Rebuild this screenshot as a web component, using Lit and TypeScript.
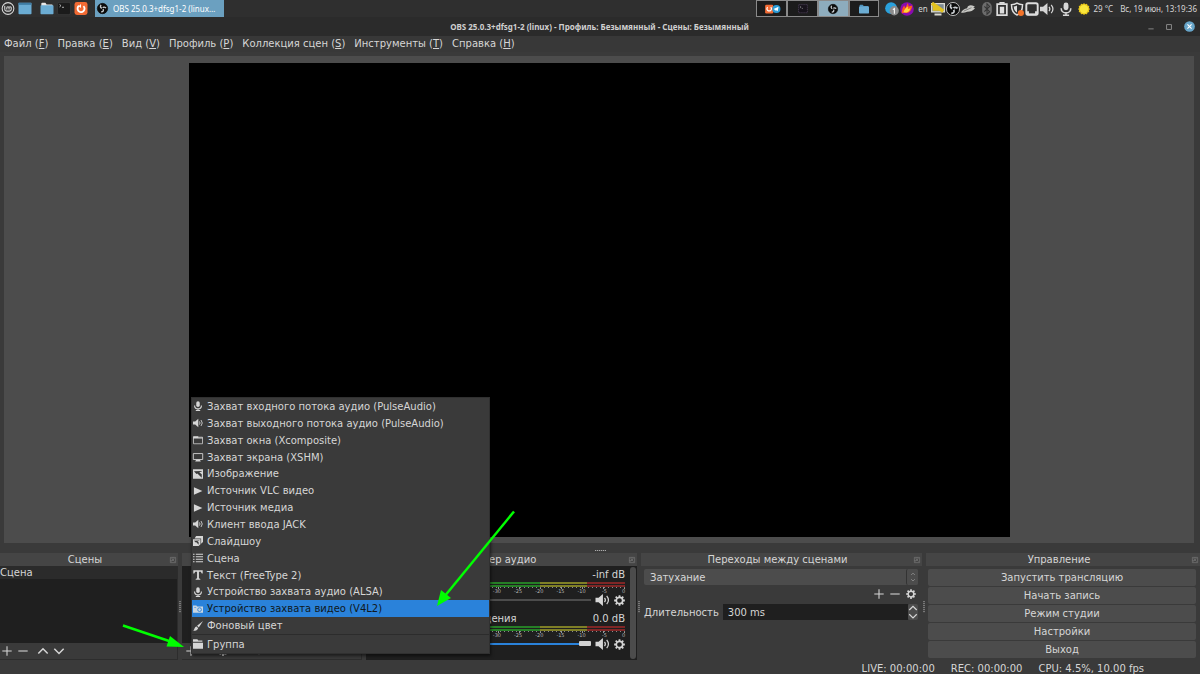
import { LitElement, html, svg, css } from "lit";
import { customElement, property } from "lit/decorators.js";

const glyphs: Record<string, unknown> = {
  mic: svg`<rect x="5.200" y="0.500" width="5.600" height="9" rx="2.800" fill="currentColor"/><path d="M2.500 7c0 7.200 11 7.200 11 0M8 12.500V15M4.500 15.200h7" fill="none" stroke="currentColor" stroke-width="1.800"/>`,
  speaker: svg`<path d="M0 5.500h3.500L8.500 1.200v13.600L3.500 10.500H0z" fill="currentColor"/><path d="M10.300 5.500q2 2.500 0 5M12.800 3.200q4 4.800 0 9.600" fill="none" stroke="currentColor" stroke-width="1.400"/>`,
  window: svg`<path d="M0.800 3.500h14.400v10.500H.8z" fill="none" stroke="currentColor" stroke-width="1.200"/><path d="M.3 1.800h8.200V4H15.500v1.500H.3z" fill="currentColor"/>`,
  monitor: svg`<path d="M.5 2.500h15v9.500H.5z" fill="none" stroke="currentColor" stroke-width="1.400"/><path d="M5 12.500h6l1.500 2.500h-9z" fill="currentColor"/>`,
  image: svg`<path fill-rule="evenodd" fill="currentColor" d="M0 0.500h16v15H0zM1.500 3.500l4 4.500 1.500-1 7 7V8.500L10 5l4-1V3z"/>`,
  play: svg`<path d="M1.500 2L15 8 1.500 14z" fill="currentColor"/>`,
  slides: svg`<path d="M5 0h11v9.500l-3 3V4H2.500z" fill="currentColor"/><path fill-rule="evenodd" fill="currentColor" d="M0 5h12v8l-3 3H0zM1.500 7.500l3 3 1-.5 3.500 4V10L7 8.500l3-.5V7z"/>`,
  list: svg`<path d="M0 2h2.500M0 6h2.500M0 10h2.500M0 14h2.500M4.500 2H16M4.500 6H16M4.500 10H16M4.500 14H16" stroke="currentColor" stroke-width="1.700"/>`,
  text: svg`<path d="M.5 .5h15v5H14L12.500 2.800h-3v10.400l2.200 1v1.300H4.300v-1.300l2.200-1V2.800h-3L2 5.500H.5z" fill="currentColor"/>`,
  camera: svg`<path d="M0 2.500h5.500L6.500 4H16v10H0z" fill="currentColor"/><circle cx="10.500" cy="9" r="3" fill="none" stroke="#2a82da" stroke-width="1.400"/><path d="M2 5.500h3" stroke="#2a82da"/>`,
  brush: svg`<path d="M16 0L6.500 7.500l2.800 3z" fill="currentColor"/><path d="M5.800 8.700l2.500 2.800C7.300 15 3.500 15.700 0 15.700 3 14 1.500 9.800 5.800 8.700z" fill="currentColor"/>`,
  folder: svg`<path d="M0 .5h7L8.500 2.500H15v2H0zM0 5.800h16V15.500H0z" fill="currentColor"/>`,
  plus: svg`<path d="M8 .5v15M.5 8h15" stroke="currentColor" stroke-width="1.700"/>`,
  minus: svg`<path d="M.5 8h15" stroke="currentColor" stroke-width="1.700"/>`,
  up: svg`<path d="M.5 12L8 4.500l7.500 7.500" fill="none" stroke="currentColor" stroke-width="2.400"/>`,
  down: svg`<path d="M.5 4.500L8 12l7.500-7.500" fill="none" stroke="currentColor" stroke-width="2.400"/>`,
  gear: svg`<circle cx="8" cy="8" r="4.600" fill="none" stroke="currentColor" stroke-width="2.400"/><path d="M8 .2v3M8 12.800v3M.2 8h3M12.800 8h3M2.500 2.500l2 2M11.500 11.500l2 2M13.500 2.500l-2 2M4.500 11.500l-2 2" stroke="currentColor" stroke-width="2.600"/>`,
  float: svg`<path d="M1 1h14v14H1zM4 4l8 8M12 4l-8 8M8 1v5M1 9h5" fill="none" stroke="currentColor" stroke-width="1.800"/>`,
  mint: svg`<circle cx="8" cy="8" r="7.200" fill="none" stroke="#d8d8d8" stroke-width="1.300"/><path d="M4 4.500v4.300q0 2.400 2.400 2.400h3.200q2.400 0 2.400-2.400V7.300q0-1.500-1.400-1.500T9.300 7.300v1.900M9.300 7.300q0-1.500-1.400-1.500T6.500 7.300v1.900" fill="none" stroke="#d8d8d8" stroke-width="1.300"/>`,
  desktop: svg`<rect x="0" y="1" width="16" height="14" rx="1" fill="#6bacd3"/><rect x="0" y="1" width="16" height="2.500" fill="#3f7ca3"/>`,
  files: svg`<path d="M1 2q0-1 1-1h4l1.500 2H14q1 0 1 1v3H1z" fill="#e8e8e8"/><rect x="0" y="4" width="16" height="11" rx="1" fill="#6bacd3"/>`,
  bluefiles: svg`<path d="M1 2q0-1 1-1h4l1.500 2H14q1 0 1 1v3H1z" fill="#4f93bd"/><rect x="0" y="4" width="16" height="11" rx="1" fill="#6bacd3"/>`,
  terminal: svg`<rect x="0" y="0.500" width="16" height="15" rx="2" fill="#1b1b1b" stroke="#444" stroke-width=".6"/><path d="M2.500 3l1.800 1.500L2.500 6M5.500 6.500H8" stroke="#ccc" fill="none"/>`,
  firefox: svg`<rect width="16" height="16" rx="3" fill="#f26a33"/><path d="M5.500 4.700A4.300 4.300 0 1 0 11 5" fill="none" stroke="#fff" stroke-width="2.300"/><path d="M8 2.500v5l-3-2.200z" fill="#fff"/>`,
  obs: svg`<circle cx="8" cy="8" r="7.500" fill="#0b0b0b" stroke="var(--ring, #0b0b0b)"/><g fill="none" stroke="#c9cdd0" stroke-width="2"><path d="M5.800 2.800Q3.800 6.500 7.200 7.600"/><path d="M13.200 7.200Q9.800 4.800 8.300 7.300"/><path d="M6 13Q10.500 12.700 8.800 8.700"/></g><circle cx="8" cy="8" r="1.100" fill="#0b0b0b"/>`,
  pair: svg`<rect x="-3" y="1" width="13" height="14" rx="2" fill="#f26a33"/><path d="M1 5A3.600 3.600 0 1 0 6 5" fill="none" stroke="#fff" stroke-width="2"/><circle cx="15" cy="8" r="6.500" fill="#2b9bd6"/><path d="M10.500 8l8-3.500-1.500 7-3-2-1 1.500-.5-2z" fill="#fff"/>`,
  darkterm: svg`<rect x="1" y="1" width="14" height="13" fill="#17131b" stroke="#5a4a66" stroke-dasharray="2 1"/><path d="M3 3.500l2 1.500-2 1.500M6 7h2" stroke="#999" fill="none"/>`,
  telegram: svg`<circle cx="7" cy="7" r="6.800" fill="#2aa1dc"/><circle cx="10.500" cy="10" r="5.300" fill="#8c8c8c"/><path d="M9 8.700l1.700-1.300v6" stroke="#fff" stroke-width="1.200" fill="none"/>`,
  flame: svg`<circle cx="8" cy="8" r="7.800" fill="#8a0bb0"/><path d="M2 13q0-6 3-9l1 3 3-6 1 4 4-1q0 3-2 6-3 4-7 2z" fill="#ff5a1f"/><path d="M4 12q1-5 5-7l0 3 3-1q-1 4-4 5z" fill="#ffd23a"/>`,
  netmon: svg`<path d="M0 1h16v11H0zM4 13h8v2.500H4z" fill="#d9d9d0"/><path d="M1.500 2.500h13v8h-13z" fill="#7e8b94"/><path d="M1 1.500L14 10.500" stroke="#e2c21f" stroke-width="4"/><path d="M2 2v8h9z" fill="#e2c21f"/>`,
  feather: svg`<path d="M0 12Q2 8 7 7q1-4 6-3l3 1-2 1 2 1q-3 4-9 4-4 2-7 1z" fill="#c9c9c5"/><path d="M3 10.500l9-4" stroke="#777"/>`,
  bluetooth: svg`<rect x="2.500" width="11" height="16" rx="5.500" fill="#6c6c6c"/><path d="M5 5l6 6-3 3V2l3 3-6 6" stroke="#333" stroke-width="1.200" fill="none"/>`,
  battery: svg`<path d="M2.500 2.500h11v12.500h-11z" fill="none" stroke="#ddd" stroke-width="2"/><path d="M5 0h6v2H5zM5.500 5.500h5v7.500h-5z" fill="#ddd"/>`,
  shield: svg`<path d="M8 1.200q3 1.800 6.300 1.800 0 9-6.300 11.800Q1.700 12 1.700 3 5 3 8 1.200z" fill="none" stroke="#ddd" stroke-width="1.700"/><path d="M8 4v8q-3.500-2-3.700-7Q6 5 8 4z" fill="#ddd"/><circle cx="12.500" cy="12.500" r="3.500" fill="#f37329"/>`,
  frame: svg`<rect x="1.500" y="1.500" width="13" height="13" rx="2" fill="none" stroke="#ddd" stroke-width="2.200"/><path d="M2 10.500h2.500V13h7v-2.500H14V15H2z" fill="#ddd"/>`,
  sun: svg`<path d="M8 0l1.500 1.500L12 1l.8 2.200L15 4l-.5 2.500L16 8l-1.500 1.500L15 12l-2.200.8L12 15l-2.500-.5L8 16l-1.500-1.500L4 15l-.8-2.200L1 12l.5-2.500L0 8l1.500-1.500L1 4l2.200-.8L4 1l2.500.5z" fill="#e9c81b"/><circle cx="8" cy="8" r="5.500" fill="#f9e63c"/>`,
  minimize: svg`<path d="M1 13h14" stroke="#8a8a8a" stroke-width="2.500"/>`,
  maximize: svg`<path d="M1.500 1.500h13v13h-13z" fill="none" stroke="#8a8a8a" stroke-width="2.600"/>`,
  close: svg`<circle cx="8" cy="8" r="7.800" fill="#67a5c9"/><path d="M5 5l6 6M11 5l-6 6" stroke="#fff" stroke-width="1.700"/>`,
};

@customElement("ui-glyph")
export class UiGlyph extends LitElement {
  @property() name = "plus";
  static styles = css`
    :host { display: block; flex: none; width: 10px; height: 10px; }
    svg { display: block; width: 100%; height: 100%; overflow: visible; }
  `;
  render() {
    return html`<svg viewBox="0 0 16 16" aria-hidden="true">${glyphs[this.name]}</svg>`;
  }
}

const reset = css`
  * { box-sizing: border-box; }
  button, input, select {
    font: inherit; color: inherit; background: none; border: 0; margin: 0; padding: 0;
    border-radius: 0; min-width: 0; appearance: none; outline: none;
  }
`;

@customElement("mixer-channel")
export class MixerChannel extends LitElement {
  @property() name = "";
  @property() level = "";
  @property({ type: Number }) value = 0;
  static styles = [reset, css`
    :host { display: block; height: 44px; }
    .top { display: flex; justify-content: space-between; line-height: 15px; }
    .meter { height: 5px; background:
      linear-gradient(#1f1f1f, #1f1f1f) 0 2px / 100% 1px no-repeat,
      linear-gradient(90deg, #267f26 0 66.7%, #7f7f26 66.7% 85%, #7f2626 85%); }
    .ticks { height: 2px; background: repeating-linear-gradient(270deg, #8a8a8a 0 1px, transparent 1px 4px) top / 100% 1px no-repeat,
      repeating-linear-gradient(270deg, #999 0 1px, transparent 1px 21px); }
    .scale { display: flex; font-size: 5px; line-height: 4px; height: 4px; color: #b5b5b5; }
    .scale span { flex: 1; text-align: right; margin: 0 -3px 0 3px; }
    .scale span:last-child { margin: 0; }
    .row { display: flex; align-items: center; gap: 4px; height: 14px; }
    input { flex: 1; height: 6px; }
    input::-webkit-slider-runnable-track { height: 2px; background: #4c4c4c; }
    input::-webkit-slider-thumb { appearance: none; width: 12px; height: 5px; margin-top: -2px; border-radius: 1px; background: #d2d2d2; }
    .on::-webkit-slider-runnable-track { background: #2a82da; }
    button { display: block; }
    .mute ui-glyph { width: 15px; height: 14px; }
    .gear ui-glyph { width: 11px; height: 11px; }
  `];
  render() {
    const marks = [-55, -50, -45, -40, -35, -30, -25, -20, -15, -10, -5, 0];
    return html`
      <div class="top"><span>${this.name}</span><span>${this.level}</span></div>
      <div class="meter"></div><div class="ticks"></div>
      <div class="scale">${marks.map((m) => html`<span>${m}</span>`)}</div>
      <div class="row">
        <input type="range" class=${this.value ? "on" : ""} min="0" max="100" .value=${String(this.value)} aria-label=${this.name}>
        <button class="mute" aria-label="Звук"><ui-glyph name="speaker"></ui-glyph></button>
        <button class="gear" aria-label="Параметры"><ui-glyph name="gear"></ui-glyph></button>
      </div>`;
  }
}

const menus: [string, string][] = [
  ["Файл", "F"], ["Правка", "E"], ["Вид", "V"], ["Профиль", "P"],
  ["Коллекция сцен", "S"], ["Инструменты", "T"], ["Справка", "H"],
];
const sources: [string, string][] = [
  ["mic", "Захват входного потока аудио (PulseAudio)"],
  ["speaker", "Захват выходного потока аудио (PulseAudio)"],
  ["window", "Захват окна (Xcomposite)"],
  ["monitor", "Захват экрана (XSHM)"],
  ["image", "Изображение"],
  ["play", "Источник VLC видео"],
  ["play", "Источник медиа"],
  ["speaker", "Клиент ввода JACK"],
  ["slides", "Слайдшоу"],
  ["list", "Сцена"],
  ["text", "Текст (FreeType 2)"],
  ["mic", "Устройство захвата аудио (ALSA)"],
  ["camera", "Устройство захвата видео (V4L2)"],
  ["brush", "Фоновый цвет"],
];
const controls = ["Запустить трансляцию", "Начать запись", "Режим студии", "Настройки", "Выход"];

@customElement("app-root")
export class AppRoot extends LitElement {
  static styles = [reset, css`
    :host {
      display: flex; flex-direction: column; position: relative; height: 100vh; min-height: 400px; overflow: hidden;
      background: #3a3a3a; color: #d6d6d6; font: 10px/13px "DejaVu Sans", sans-serif; white-space: nowrap;
    }
    .panel { display: flex; justify-content: space-between; height: 17px; background: #2f2f2f; font: 8px/17px "Noto Sans", sans-serif; }
    .launch, .tray { display: flex; align-items: center; }
    .launch { gap: 3px; padding-left: 1px; }
    .launch ui-glyph { width: 14px; height: 13px; }
    .launch .gap { margin-left: 5px; }
    .task { display: flex; align-items: center; gap: 5px; width: 129px; height: 17px; margin-left: 4px; padding: 0 2px; background: #6ba0c0; color: #fff; }
    .task ui-glyph { width: 11px; height: 11px; }
    .spaces { display: flex; width: 123px; height: 17px; margin-right: 5px; }
    .spaces button { flex: 1; display: flex; align-items: center; justify-content: center; border: 1px solid #8a8a8a; background: #1c1c1c; }
    .spaces .here { background: #8dacbd; }
    .tray { gap: 1px; padding-right: 3px; }
    .tray ui-glyph { width: 14px; height: 14px; }
    .tray .spaces ui-glyph { width: 10px; height: 10px; }
    .tray .wide { margin-right: 4px; }
    .obs { --ring: #ccc; }
    .lang { width: 15px; text-align: center; }
    .tray .sun { width: 12px; height: 12px; margin: 0 2px 0 4px; }
    .clock { margin-left: 6px; }
    .title { display: flex; align-items: center; height: 19px; padding: 0 5px; background: #2b2b2b; font: bold 8px/19px "Noto Sans", sans-serif; color: #cfcfcf; }
    .title h1 { flex: 1; margin: 0; padding-left: 46px; font: inherit; text-align: center; }
    .title div { display: flex; align-items: center; gap: 12px; }
    .title ui-glyph { width: 6px; height: 6px; }
    .title .x { width: 11px; height: 11px; }
    .menubar { display: flex; gap: 9px; height: 16px; padding: 0 4px 2px; background: #383838; }
    .preview { flex: 1; min-height: 0; display: flex; justify-content: center; margin: 4px 6px 0 4px; padding: 7px 0 6px; background: #4c4c4c; }
    .canvas { height: 100%; aspect-ratio: 821 / 474; background: #000; }
    .hgrip { display: flex; justify-content: center; align-items: flex-end; height: 10px; padding-bottom: 2px; }
    .hgrip i { width: 11px; height: 1px; background: repeating-linear-gradient(90deg, #aaa 0 1px, #555 1px 2px); }
    .docks { display: grid; grid-template-columns: 178fr 4px 180fr 4px 271fr 4px 281fr 4px 274fr; grid-template-rows: 107px; }
    .vgrip { align-self: center; justify-self: center; width: 2px; height: 12px; background: repeating-linear-gradient(#777 0 1px, #444 1px 2px); }
    .dock { display: flex; flex-direction: column; min-width: 0; position: relative; }
    .dock h2 { display: flex; align-items: center; height: 13px; margin: 0; padding: 0 2px 0 0; background: #454545; font: inherit; }
    .dock h2 span { flex: 1; text-align: center; }
    .dock h2 ui-glyph { width: 6px; height: 6px; color: #777; }
    .list { flex: 1; background: #1f1f1f; border-right: 1px solid #2c2c2c; }
    .list button { display: block; width: 100%; height: 13px; background: #2b2b2b; text-align: left; }
    .tools { display: flex; align-items: center; gap: 6px; height: 17px; padding: 0 2px; border: solid #2d2d2d; border-width: 0 1px 1px 0; }
    .tools .far { margin-left: 4px; }
    .sources .tools { padding-left: 4px; }
    .mixer { display: flex; flex: 1; gap: 5px; padding: 1px 1px 1px 5px; background: #1f1f1f; }
    .mixer > .channels { flex: 1; min-width: 0; }
    .bar { width: 6px; border-radius: 3px; background: #4c4c4c; }
    .trans { display: flex; flex-direction: column; padding: 3px 4px 0 3px; }
    .combo { display: flex; align-items: center; height: 16px; border-radius: 2px; background: #4c4c4c; }
    .combo select { flex: 1; height: 16px; padding: 0 6px; }
    .spin { display: flex; flex-direction: column; align-items: center; justify-content: center; gap: 2px; width: 12px; height: 16px; border-left: 1px solid #333; border-radius: 2px; background: #4c4c4c; }
    .combo .spin ui-glyph { width: 4px; height: 4px; color: #aaa; }
    .ops { display: flex; justify-content: flex-end; align-items: center; gap: 6px; height: 19px; padding: 0 2px 1px 0; }
    .dur { display: flex; align-items: center; gap: 4px; }
    .dur input { flex: 1; height: 16px; padding: 0 5px; background: #1f1f1f; }
    .dur .spin { width: 10px; margin-left: -4px; gap: 0; border: 0; }
    .dur .spin ui-glyph { width: 8px; height: 8px; }
    .controls { display: flex; flex: 1; flex-direction: column; gap: 1px; padding: 3px 4px 2px 2px; }
    .controls button { flex: 1; border-radius: 2px; background: #4c4c4c; }
    .status { display: flex; justify-content: flex-end; gap: 16px; height: 14px; padding: 3px 56px 0 0; line-height: 12px; }
    .popup { position: absolute; left: 9px; bottom: 6px; z-index: 2; display: flex; flex-direction: column; width: 299px; height: 257px; background: #3a3a3a; border: 1px solid #303030; box-shadow: 1px 2px 3px #0008; }
    .popup button { flex: 1; display: flex; align-items: center; gap: 4px; min-height: 0; padding: 0 1px; text-align: left; line-height: 13px; }
    .popup .hot { background: #2a82da; color: #101820; }
    .popup .hot ui-glyph { color: #c9d6e2; }
    .popup hr { width: 100%; height: 1px; margin: 0 0 1px; border: 0; background: #2c2c2c; }
    .arrows { position: absolute; inset: 0; z-index: 3; width: 100%; height: 100%; pointer-events: none; }
  `];

  head(t: string) {
    return html`<h2><span>${t}</span><ui-glyph name="float"></ui-glyph></h2>`;
  }
  tool(n: string, label: string, cls = "") {
    return html`<button class=${cls} aria-label=${label}><ui-glyph name=${n}></ui-glyph></button>`;
  }

  render() {
    return html`
      <nav class="panel">
        <div class="launch">
          <ui-glyph name="mint"></ui-glyph><ui-glyph name="desktop"></ui-glyph>
          <ui-glyph class="gap" name="files"></ui-glyph><ui-glyph name="terminal"></ui-glyph><ui-glyph name="firefox"></ui-glyph>
          <button class="task"><ui-glyph name="obs"></ui-glyph>OBS 25.0.3+dfsg1-2 (linux…</button>
        </div>
        <div class="tray">
          <div class="spaces">
            <button aria-label="1"><ui-glyph name="pair"></ui-glyph></button>
            <button aria-label="2"><ui-glyph name="darkterm"></ui-glyph></button>
            <button aria-label="3" class="here"><ui-glyph name="obs"></ui-glyph></button>
            <button aria-label="4"><ui-glyph name="bluefiles"></ui-glyph></button>
          </div>
          <ui-glyph name="telegram"></ui-glyph><ui-glyph name="flame"></ui-glyph>
          <span class="lang">en</span>
          <ui-glyph name="netmon"></ui-glyph><ui-glyph class="obs" name="obs"></ui-glyph>
          <ui-glyph class="wide" name="feather"></ui-glyph><ui-glyph name="bluetooth"></ui-glyph>
          <ui-glyph name="battery"></ui-glyph><ui-glyph name="shield"></ui-glyph><ui-glyph name="frame"></ui-glyph>
          <ui-glyph class="wide" name="speaker"></ui-glyph><ui-glyph name="mic"></ui-glyph>
          <ui-glyph class="sun" name="sun"></ui-glyph><span>29 °C</span><time class="clock">Вс, 19 июн, 13:19:36</time>
        </div>
      </nav>
      <header class="title">
        <h1>OBS 25.0.3+dfsg1-2 (linux) - Профиль: Безымянный - Сцены: Безымянный</h1>
        <div>
          <button aria-label="Свернуть"><ui-glyph name="minimize"></ui-glyph></button>
          <button aria-label="Развернуть"><ui-glyph name="maximize"></ui-glyph></button>
          <button aria-label="Закрыть"><ui-glyph class="x" name="close"></ui-glyph></button>
        </div>
      </header>
      <nav class="menubar">${menus.map(([t, k]) => html`<button>${t} (<u>${k}</u>)</button>`)}</nav>
      <main class="preview"><div class="canvas"></div></main>
      <div class="hgrip"><i></i></div>
      <div class="docks">
        <section class="dock">
          ${this.head("Сцены")}
          <div class="list"><button>Сцена</button></div>
          <div class="tools">${this.tool("plus", "Добавить")}${this.tool("minus", "Удалить")}${this.tool("up", "Вверх", "far")}${this.tool("down", "Вниз")}</div>
        </section>
        <i class="vgrip"></i>
        <section class="dock sources">
          ${this.head("Источники")}
          <div class="list"></div>
          <div class="tools">${this.tool("plus", "Добавить")}${this.tool("minus", "Удалить")}${this.tool("gear", "Свойства")}${this.tool("up", "Вверх", "far")}${this.tool("down", "Вниз")}</div>
          <div class="popup" role="menu">
            ${sources.map(([icon, t]) => html`<button role="menuitem" class=${icon === "camera" ? "hot" : ""}><ui-glyph name=${icon}></ui-glyph>${t}</button>`)}
            <hr>
            <button role="menuitem"><ui-glyph name="folder"></ui-glyph>Группа</button>
          </div>
        </section>
        <i></i>
        <section class="dock">
          ${this.head("Микшер аудио")}
          <div class="mixer">
            <div class="channels">
              <mixer-channel name="Mic/Aux" level="-inf dB"></mixer-channel>
              <mixer-channel name="Источник воспроизведения" level="0.0 dB" .value=${100}></mixer-channel>
            </div>
            <div class="bar"></div>
          </div>
        </section>
        <i class="vgrip"></i>
        <section class="dock">
          ${this.head("Переходы между сценами")}
          <div class="trans">
            <div class="combo">
              <select aria-label="Переход"><option>Затухание</option></select>
              <span class="spin"><ui-glyph name="up"></ui-glyph><ui-glyph name="down"></ui-glyph></span>
            </div>
            <div class="ops">${this.tool("plus", "Добавить")}${this.tool("minus", "Удалить")}${this.tool("gear", "Свойства")}</div>
            <div class="dur">
              <label for="duration">Длительность</label>
              <input id="duration" value="300 ms">
              <span class="spin">${this.tool("up", "Больше")}${this.tool("down", "Меньше")}</span>
            </div>
          </div>
        </section>
        <i class="vgrip"></i>
        <section class="dock">
          ${this.head("Управление")}
          <div class="controls">${controls.map((c) => html`<button>${c}</button>`)}</div>
        </section>
      </div>
      <footer class="status"><span>LIVE: 00:00:00</span><span>REC: 00:00:00</span><span>CPU: 4.5%, 10.00 fps</span></footer>
      <svg class="arrows" viewBox="0 0 1200 674" aria-hidden="true">
        <g stroke="#00ff00" stroke-width="2.500" fill="#00ff00">
          <path d="M514 511.500L444 597"/><path d="M437 606l4-16 10 8z" stroke="none"/>
          <path d="M123 625.500L172 642"/><path d="M184 647l-17.500-.5 3.500-10.500z" stroke="none"/>
        </g>
      </svg>`;
  }
}
